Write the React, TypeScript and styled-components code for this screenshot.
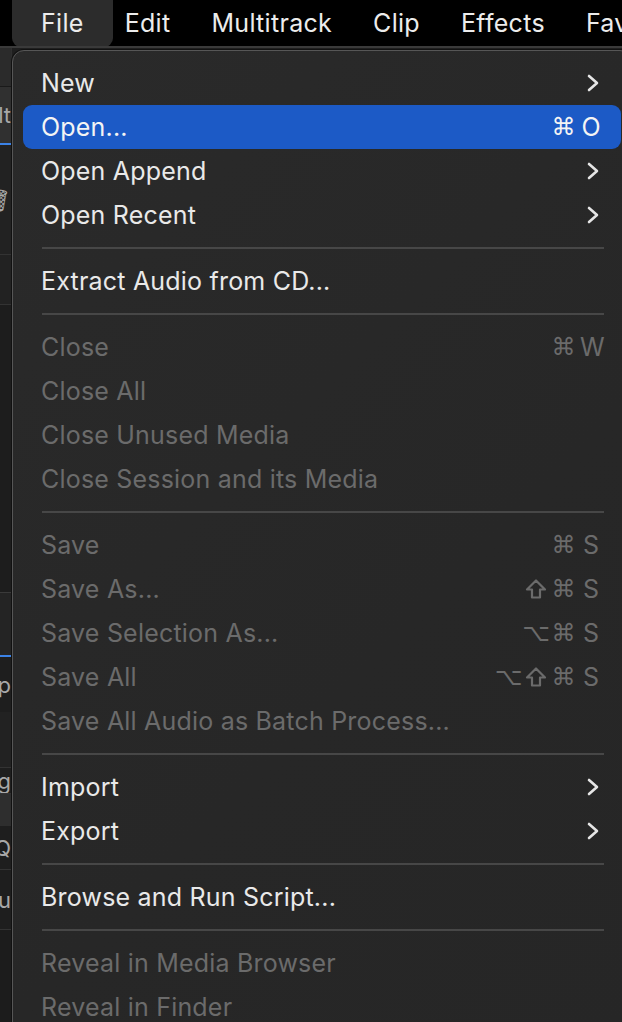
import React from "react";
import styled, { createGlobalStyle, css } from "styled-components";

const GlobalStyle = createGlobalStyle`
  html, body {
    margin: 0;
    padding: 0;
    width: 622px;
    height: 1022px;
    overflow: hidden;
    background: #1c1c1c;
  }
  * { box-sizing: border-box; }
`;

const FONT = `Inter, "Noto Sans", "DejaVu Sans", sans-serif`;

const Screen = styled.div`
  position: relative;
  width: 622px;
  height: 1022px;
  overflow: hidden;
  display: flex;
  flex-direction: column;
  font-family: ${FONT};
  background: #1c1c1c;
`;

const MenuBar = styled.div`
  height: 48px;
  flex: none;
  background: #000;
  border-bottom: 2px solid #3a3a3a;
  display: flex;
  align-items: center;
  gap: 41px;
  padding-left: 41px;
  white-space: nowrap;
  overflow: hidden;
`;

const MenuBarItem = styled.div<{ $open?: boolean }>`
  position: relative;
  color: #ececec;
  font-size: 25px;
  line-height: 46px;
  height: 46px;
  letter-spacing: 0.3px;
  ${(p) =>
    p.$open &&
    css`
      &::before {
        content: "";
        position: absolute;
        left: -29px;
        right: -29px;
        top: 0;
        bottom: -1px;
        border-radius: 0 0 9px 9px;
        background: #2c2c2c;
        z-index: 0;
      }
    `}
  span {
    position: relative;
    z-index: 1;
  }
`;

const Workspace = styled.div`
  flex: 1;
  display: flex;
`;

const Sidebar = styled.div`
  width: 12px;
  flex: none;
  display: flex;
  flex-direction: column;
  overflow: hidden;
  border-right: 1px solid #2f2f2f;
`;

const Strip = styled.div<{ $h: number; $bg: string; $line?: string; $blue?: boolean }>`
  height: ${(p) => p.$h}px;
  flex: none;
  background: ${(p) => p.$bg};
  border-bottom: ${(p) => (p.$blue ? "2px solid #3b82e6" : p.$line ? `1px solid ${p.$line}` : "none")};
  display: flex;
  align-items: center;
  justify-content: flex-end;
  color: #a8a8a8;
  font-size: 22px;
  white-space: nowrap;
  overflow: hidden;
`;

const Main = styled.div`
  flex: 1;
  background: #1f1f1f;
`;

const MenuPanel = styled.div`
  position: absolute;
  top: 50px;
  left: 12px;
  width: 620px;
  height: 1000px;
  background: linear-gradient(135deg, #2a2a2a 0%, #272727 60%, #262626 100%);
  border: 1px solid #565656;
  border-radius: 12px;
  padding: 10px;
  box-shadow: 0 0 0 1px #111;
  display: flex;
  flex-direction: column;
`;

const Row = styled.div<{ $active?: boolean; $disabled?: boolean }>`
  height: 44px;
  flex: none;
  display: flex;
  align-items: center;
  padding: 0 19px 0 18px;
  border-radius: 9px;
  font-size: 25px;
  letter-spacing: 0.2px;
  white-space: nowrap;
  color: ${(p) => (p.$disabled ? "#6b6b6b" : "#e9e9e9")};
  background: ${(p) => (p.$active ? "#1c5ac6" : "transparent")};
  ${(p) => p.$active && css`color: #f4f4f4;`}
`;

const Label = styled.span`
  flex: 1;
`;

const Shortcut = styled.span`
  display: flex;
  align-items: center;
  gap: 5.5px;
`;

const KeyCell = styled.span`
  width: 22px;
  text-align: center;
  font-size: 25px;
  letter-spacing: 0;
`;

const ModCell = styled.span`
  width: 22px;
  display: flex;
  justify-content: center;
  align-items: center;
  font-family: "DejaVu Sans", sans-serif;
  font-size: 24px;
  letter-spacing: 0;
`;

const Separator = styled.div`
  height: 22px;
  flex: none;
  display: flex;
  align-items: center;
  padding: 0 17px 0 19px;
  &::after {
    content: "";
    flex: 1;
    height: 2px;
    background: #474747;
  }
`;

const Chevron = () => (
  <svg width="12" height="18" viewBox="0 0 12 18" style={{ marginRight: 3 }}>
    <path d="M2 2 L10 9 L2 16" fill="none" stroke="#e6e6e6" strokeWidth="2.6" strokeLinecap="round" strokeLinejoin="round" />
  </svg>
);

const ShiftIcon = () => (
  <svg width="22" height="22" viewBox="0 0 22 22">
    <path
      d="M11 2.5 L20 11.5 L15 11.5 L15 19.5 L7 19.5 L7 11.5 L2 11.5 Z"
      fill="none"
      stroke="currentColor"
      strokeWidth="2.2"
      strokeLinejoin="round"
    />
  </svg>
);

type Item =
  | { sep: true }
  | { sep?: false; label: string; sub?: boolean; keys?: string[]; disabled?: boolean; active?: boolean };

const items: Item[] = [
  { label: "New", sub: true },
  { label: "Open...", keys: ["⌘", "O"], active: true },
  { label: "Open Append", sub: true },
  { label: "Open Recent", sub: true },
  { sep: true },
  { label: "Extract Audio from CD..." },
  { sep: true },
  { label: "Close", keys: ["⌘", "W"], disabled: true },
  { label: "Close All", disabled: true },
  { label: "Close Unused Media", disabled: true },
  { label: "Close Session and its Media", disabled: true },
  { sep: true },
  { label: "Save", keys: ["⌘", "S"], disabled: true },
  { label: "Save As...", keys: ["⇧", "⌘", "S"], disabled: true },
  { label: "Save Selection As...", keys: ["⌥", "⌘", "S"], disabled: true },
  { label: "Save All", keys: ["⌥", "⇧", "⌘", "S"], disabled: true },
  { label: "Save All Audio as Batch Process...", disabled: true },
  { sep: true },
  { label: "Import", sub: true },
  { label: "Export", sub: true },
  { sep: true },
  { label: "Browse and Run Script..." },
  { sep: true },
  { label: "Reveal in Media Browser", disabled: true },
  { label: "Reveal in Finder", disabled: true },
];

const barItems = ["File", "Edit", "Multitrack", "Clip", "Effects", "Favorites"];

export default function App() {
  return (
    <>
      <GlobalStyle />
      <Screen>
        <MenuBar>
          {barItems.map((b, i) => (
            <MenuBarItem key={b} $open={i === 0}>
              <span>{b}</span>
            </MenuBarItem>
          ))}
        </MenuBar>
        <Workspace>
          <Sidebar>
            <Strip $h={39} $bg="#2b2b2b" $line="#1a1a1a" />
            <Strip $h={58} $bg="#303030" $blue>Filt</Strip>
            <Strip $h={110} $bg="#222222" $line="#333333">🗑</Strip>
            <Strip $h={50} $bg="#222222" $line="#333333" />
            <Strip $h={288} $bg="#1d1d1d" $line="#3a3a3a" />
            <Strip $h={64} $bg="#242424" $blue />
            <Strip $h={55} $bg="#1e1e1e">Top</Strip>
            <Strip $h={56} $bg="#222222" $line="#333333" />
            <Strip $h={26} $bg="#1e1e1e" $line="#333333">ng</Strip>
            <Strip $h={32} $bg="#2e2e2e" />
            <Strip $h={44} $bg="#1e1e1e" $line="#333333">Q</Strip>
            <Strip $h={60} $bg="#1e1e1e" $line="#333333">Ou</Strip>
          </Sidebar>
          <Main />
        </Workspace>
        <MenuPanel>
          {items.map((it, i) =>
            it.sep ? (
              <Separator key={i} />
            ) : (
              <Row key={i} $active={it.active} $disabled={it.disabled}>
                <Label>{it.label}</Label>
                {it.keys && (
                  <Shortcut>
                    {it.keys.map((k, j) =>
                      j === it.keys!.length - 1 ? (
                        <KeyCell key={j}>{k}</KeyCell>
                      ) : (
                        <ModCell key={j}>{k === "⇧" ? <ShiftIcon /> : k}</ModCell>
                      )
                    )}
                  </Shortcut>
                )}
                {it.sub && <Chevron />}
              </Row>
            )
          )}
        </MenuPanel>
      </Screen>
    </>
  );
}
